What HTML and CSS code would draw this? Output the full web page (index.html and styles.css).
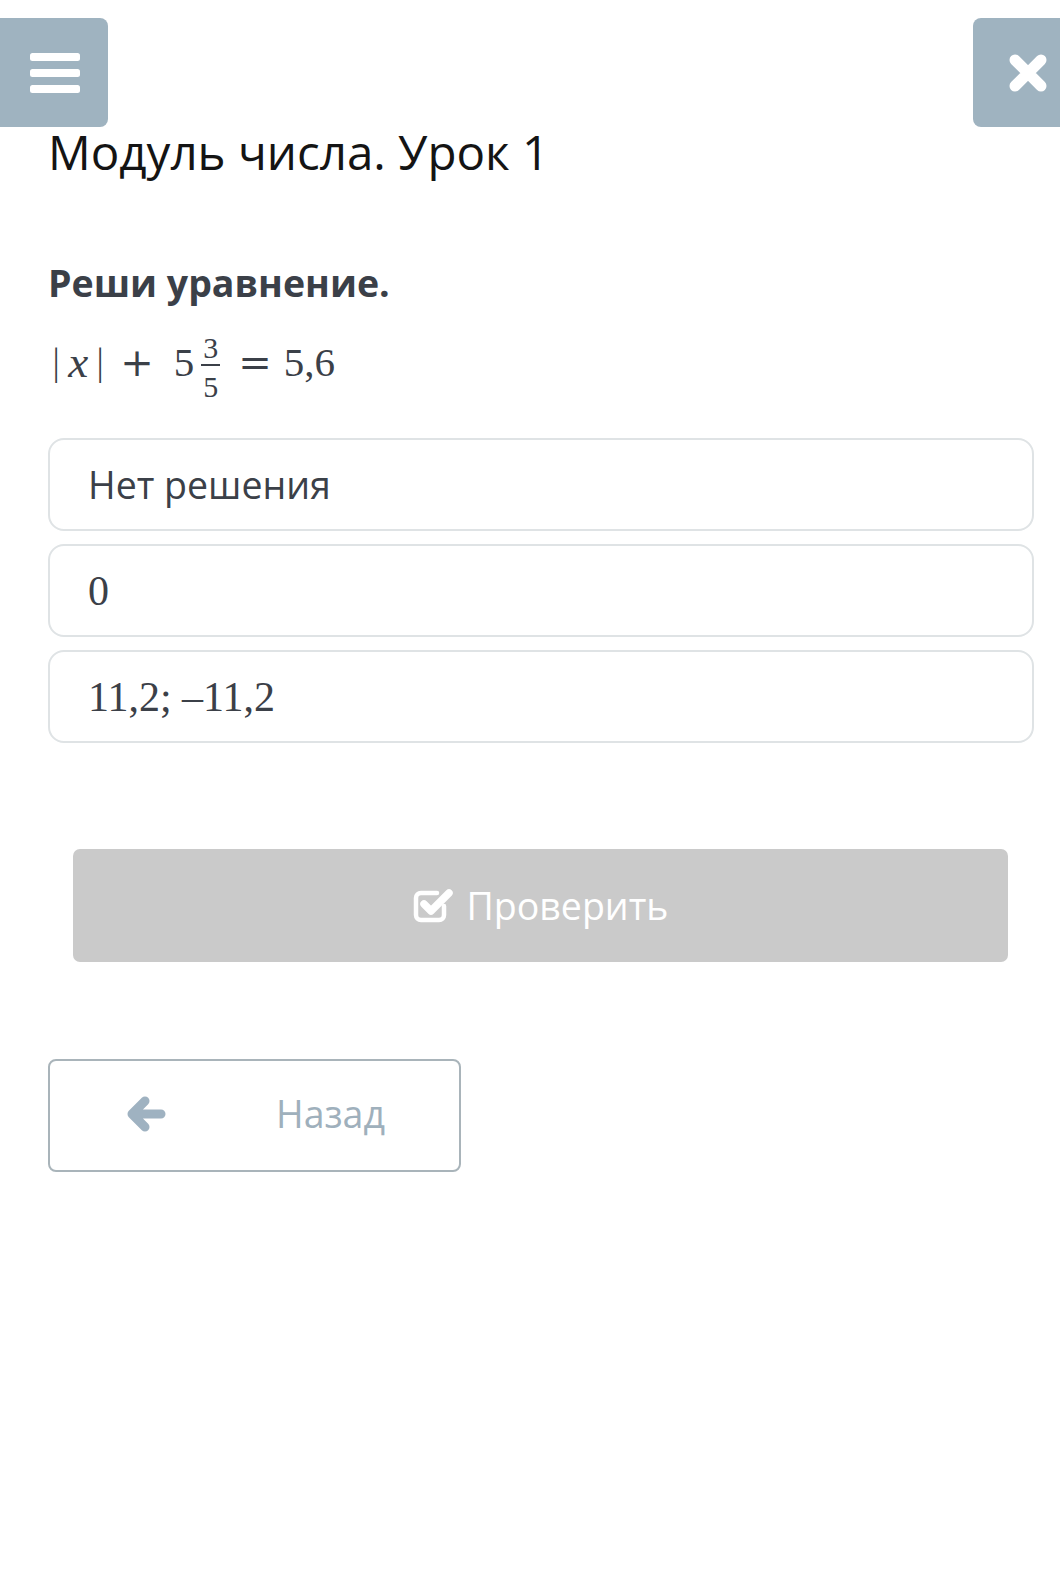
FILE: index.html
```html
<!DOCTYPE html>
<html lang="ru">
<head>
<meta charset="utf-8">
<title>Модуль числа. Урок 1</title>
<link rel="stylesheet" href="styles.css">
</head>
<body>
<header class="topbar">
  <button class="nav-btn menu-btn" aria-label="Меню">
    <svg width="50" height="42" viewBox="0 0 50 42"><rect x="0" y="1" width="50" height="8" rx="2.5"/><rect x="0" y="17" width="50" height="8" rx="2.5"/><rect x="0" y="33" width="50" height="8" rx="2.5"/></svg>
  </button>
  <button class="nav-btn close-btn" aria-label="Закрыть">
    <svg width="40" height="40" viewBox="0 0 40 40"><path d="M7 7 L33 33 M33 7 L7 33" stroke="#fff" stroke-width="11" stroke-linecap="round"/></svg>
  </button>
</header>
<main class="content">
  <h1 class="title">Модуль числа. Урок 1</h1>
  <h2 class="task">Реши уравнение.</h2>
  <div class="math">
    <span class="bar">|</span><i class="var">x</i><span class="bar">|</span><span class="op plus">+</span><span class="num">5</span><span class="frac"><span class="fnum">3</span><span class="fden">5</span></span><span class="op eq">=</span><span class="num">5,6</span>
  </div>
  <div class="options">
    <div class="option"><span class="opt-text">Нет решения</span></div>
    <div class="option"><span class="opt-math">0</span></div>
    <div class="option"><span class="opt-math">11,2; –11,2</span></div>
  </div>
  <div class="check-wrap">
    <button class="check-btn">
      <svg class="check-icon" width="42" height="38" viewBox="0 0 42 38"><path d="M31 21 V30 a5 5 0 0 1 -5 5 H8 a5 5 0 0 1 -5 -5 V13 a5 5 0 0 1 5 -5 H24" fill="none" stroke="#fff" stroke-width="4.5" stroke-linecap="round"/><path d="M11 19 L18 26 L36 8" fill="none" stroke="#fff" stroke-width="7.5" stroke-linecap="round" stroke-linejoin="round"/></svg>
      <span>Проверить</span>
    </button>
  </div>
  <button class="back-btn">
    <svg class="back-icon" width="40" height="36" viewBox="0 0 40 36"><path d="M35 18 H7 M19 5 L6 18 L19 31" fill="none" stroke="#9fb2c1" stroke-width="9" stroke-linecap="round" stroke-linejoin="round"/></svg>
    <span class="back-text">Назад</span>
  </button>
</main>
</body>
</html>
```

FILE: styles.css
```css
* { box-sizing: border-box; }
html, body { margin: 0; padding: 0; background: #fff; }
body { font-family: "Open Sans", "Noto Sans", sans-serif; color: #3b4048; width: 1060px; }

.topbar {
  display: flex;
  justify-content: space-between;
  padding-top: 18px;
}
.nav-btn {
  border: 0;
  margin: 0;
  padding: 0;
  background: #9fb3c0;
  height: 109px;
  display: flex;
  align-items: center;
  justify-content: center;
}
.menu-btn {
  width: 108px;
  border-radius: 0 8px 8px 0;
  padding-right: 28px;
  justify-content: flex-end;
  fill: #fff;
}
.close-btn {
  width: 87px;
  border-radius: 8px 0 0 8px;
  padding-left: 35px;
  justify-content: flex-start;
}

.content { padding: 0 26px 0 48px; }

.title {
  margin: -3px 0 0 0;
  font-size: 47.5px;
  line-height: 56px;
  font-weight: 400;
  color: #141414;
}
.task {
  margin: 79px 0 0 0;
  font-size: 37.5px;
  line-height: 48px;
  font-weight: 700;
  color: #3b4048;
}
.math {
  margin: 18px 0 0 2px;
  height: 74px;
  display: flex;
  align-items: center;
  font-family: "Liberation Serif", "DejaVu Serif", serif;
  font-size: 41px;
  color: #3b4048;
}
.bar { font-family: "DejaVu Serif", serif; font-size: 36px; font-weight: 300; transform: scaleX(0.6); }
.var { font-family: "Liberation Serif", serif; font-style: italic; font-size: 45px; margin: 0 6px 0 6px; }
.op { font-family: "DejaVu Serif", serif; font-size: 40px; }
.plus { margin: 0 20px 0 14px; }
.eq { margin: 0 12px 0 18px; }
.frac {
  display: inline-flex;
  flex-direction: column;
  align-items: center;
  font-size: 30px;
  line-height: 27px;
  margin-left: 7px;
  padding-top: 10px;
}
.fnum { border-bottom: 2px solid #3b4048; padding: 0 2px 3px; }
.fden { padding-top: 7px; }

.options {
  margin-top: 39px;
  display: flex;
  flex-direction: column;
  gap: 13px;
}
.option {
  height: 93px;
  border: 2px solid #dfe3e5;
  border-radius: 16px;
  padding-left: 38px;
  display: flex;
  align-items: center;
}
.opt-text { font-size: 37.5px; color: #3b4048; }
.opt-math { font-family: "Liberation Serif", "DejaVu Serif", serif; font-size: 42px; color: #3b4048; }

.check-wrap { padding: 106px 26px 0 25px; }
.check-btn {
  width: 100%;
  height: 113px;
  border: 0;
  border-radius: 7px;
  background: #cacaca;
  display: flex;
  align-items: center;
  justify-content: center;
  gap: 12px;
  font-family: "Open Sans", sans-serif;
  font-size: 37.5px;
  color: #fff;
  padding: 0 0 0 0;
}
.check-icon { margin-top: -4px; }

.back-btn {
  margin-top: 97px;
  width: 413px;
  height: 113px;
  border: 2px solid #a9b4ba;
  border-radius: 8px;
  background: #fff;
  display: flex;
  align-items: center;
  padding: 0 0 4px 76px;
  font-family: "Open Sans", sans-serif;
}
.back-text {
  margin-left: 110px;
  font-size: 37.5px;
  color: #9fb0bc;
}
```
